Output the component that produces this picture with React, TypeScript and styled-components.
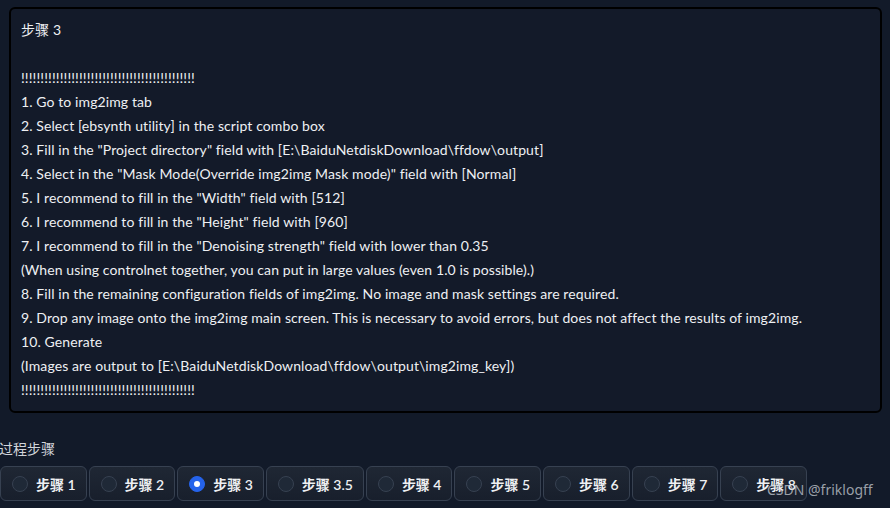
import styled, { createGlobalStyle } from "styled-components";

const GlobalStyle = createGlobalStyle`
  html, body {
    margin: 0;
    padding: 0;
    background: #121a29;
    overflow: hidden;
  }
  body {
    font-family: Lato, "Noto Sans CJK SC", sans-serif;
    color: #e5e7eb;
  }
`;

const bangs = "!".repeat(45);

const lines = [
  "步骤 3",
  "",
  bangs,
  "1. Go to img2img tab",
  "2. Select [ebsynth utility] in the script combo box",
  '3. Fill in the "Project directory" field with [E:\\BaiduNetdiskDownload\\ffdow\\output]',
  '4. Select in the "Mask Mode(Override img2img Mask mode)" field with [Normal]',
  '5. I recommend to fill in the "Width" field with [512]',
  '6. I recommend to fill in the "Height" field with [960]',
  '7. I recommend to fill in the "Denoising strength" field with lower than 0.35',
  "(When using controlnet together, you can put in large values (even 1.0 is possible).)",
  "8. Fill in the remaining configuration fields of img2img. No image and mask settings are required.",
  "9. Drop any image onto the img2img main screen. This is necessary to avoid errors, but does not affect the results of img2img.",
  "10. Generate",
  "(Images are output to [E:\\BaiduNetdiskDownload\\ffdow\\output\\img2img_key])",
  bangs,
];

const steps = ["步骤 1", "步骤 2", "步骤 3", "步骤 3.5", "步骤 4", "步骤 5", "步骤 6", "步骤 7", "步骤 8"];

const Page = styled.div`
  position: relative;
  width: 890px;
  height: 508px;
  padding-top: 7px;
  box-sizing: border-box;
`;

const Panel = styled.div`
  margin-left: 9px;
  width: 873px;
  box-sizing: border-box;
  border: 2px solid #000;
  border-radius: 6px;
  background: #131a29;
  padding: 9px 10px;
`;

const Line = styled.div`
  font-size: 14px;
  line-height: 24px;
  height: 24px;
  letter-spacing: 0.1px;
  white-space: pre;
  color: #eef0f3;
`;

const GroupLabel = styled.div`
  margin: 26px 0 0 -1px;
  font-size: 14px;
  line-height: 20px;
  color: #d1d5db;
`;

const Options = styled.div`
  display: flex;
  gap: 2px;
  margin-top: 7px;
`;

const Option = styled.label`
  display: flex;
  align-items: center;
  gap: 8px;
  height: 35px;
  box-sizing: border-box;
  padding: 0 10px 0 11px;
  border: 1px solid #374151;
  border-radius: 6px;
  background: linear-gradient(to bottom, #1f2734, #181f2c);
  font-size: 14px;
  font-weight: 600;
  color: #eef0f3;
`;

const Radio = styled.span<{ $checked: boolean }>`
  width: 16px;
  height: 16px;
  border-radius: 50%;
  box-sizing: border-box;
  flex: none;
  display: flex;
  align-items: center;
  justify-content: center;
  border: 1px solid ${(p) => (p.$checked ? "#2563eb" : "#374151")};
  background: ${(p) => (p.$checked ? "#2563eb" : "#1f2937")};

  &::after {
    content: "";
    display: ${(p) => (p.$checked ? "block" : "none")};
    width: 6px;
    height: 6px;
    border-radius: 50%;
    background: #fff;
  }
`;

const Watermark = styled.div`
  position: absolute;
  left: 767px;
  top: 480px;
  font-family: "Noto Sans", sans-serif;
  font-size: 14px;
  line-height: 20px;
  color: rgba(200, 205, 212, 0.75);
`;

const App = () => {
  return (
    <Page>
      <GlobalStyle />
      <Panel>
        {lines.map((text, i) => (
          <Line key={i}>{text}</Line>
        ))}
      </Panel>
      <GroupLabel>过程步骤</GroupLabel>
      <Options>
        {steps.map((step) => (
          <Option key={step}>
            <Radio $checked={step === "步骤 3"} />
            {step}
          </Option>
        ))}
      </Options>
      <Watermark>CSDN @friklogff</Watermark>
    </Page>
  );
};

export default App;
